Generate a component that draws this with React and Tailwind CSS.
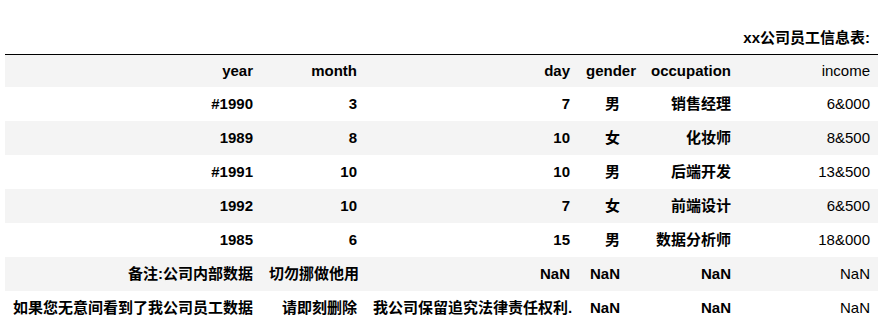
import React from "react";

const rows = [
  ["#1990", "3", "7", "男", "销售经理", "6&000"],
  ["1989", "8", "10", "女", "化妆师", "8&500"],
  ["#1991", "10", "10", "男", "后端开发", "13&500"],
  ["1992", "10", "7", "女", "前端设计", "6&500"],
  ["1985", "6", "15", "男", "数据分析师", "18&000"],
  ["备注:公司内部数据", "切勿挪做他用", "NaN", "NaN", "NaN", "NaN"],
  ["如果您无意间看到了我公司员工数据", "请即刻删除", "我公司保留追究法律责任权利.", "NaN", "NaN", "NaN"],
];

const headers = ["year", "month", "day", "gender", "occupation", "income"];

export default function App() {
  return (
    <div
      className="w-[885px] h-[331px] bg-white text-black text-[15px]"
      style={{ fontFamily: '"Liberation Sans", "Noto Sans CJK SC", sans-serif' }}
    >
      <div className="ml-[5px] w-[873px]">
        <div className="h-[54px] flex items-end justify-end pb-[6px] pr-[8px]">
          <span className="font-bold leading-[20px]">xx公司员工信息表:</span>
        </div>
        <table className="table-fixed border-collapse w-[873px]">
          <colgroup>
            <col className="w-[256px]" />
            <col className="w-[104px]" />
            <col className="w-[213px]" />
            <col className="w-[50px]" />
            <col className="w-[111px]" />
            <col className="w-[139px]" />
          </colgroup>
          <thead>
            <tr className="bg-[#f4f4f4] border-t border-black h-[32px]">
              {headers.map((h, i) => (
                <th
                  key={h}
                  className={
                    "text-right px-[8px] align-middle leading-[20px] whitespace-nowrap " +
                    (i === 5 ? "font-normal" : "font-bold")
                  }
                >
                  {h}
                </th>
              ))}
            </tr>
          </thead>
          <tbody>
            {rows.map((r, ri) => (
              <tr key={ri} className={"h-[34px] " + (ri % 2 === 1 ? "bg-[#f4f4f4]" : "bg-white")}>
                {r.map((c, ci) => (
                  <td
                    key={ci}
                    className={
                      "text-right px-[8px] align-middle leading-[20px] whitespace-nowrap " +
                      (ci === 5 ? "font-normal" : "font-bold")
                    }
                  >
                    {c}
                  </td>
                ))}
              </tr>
            ))}
          </tbody>
        </table>
      </div>
    </div>
  );
}
